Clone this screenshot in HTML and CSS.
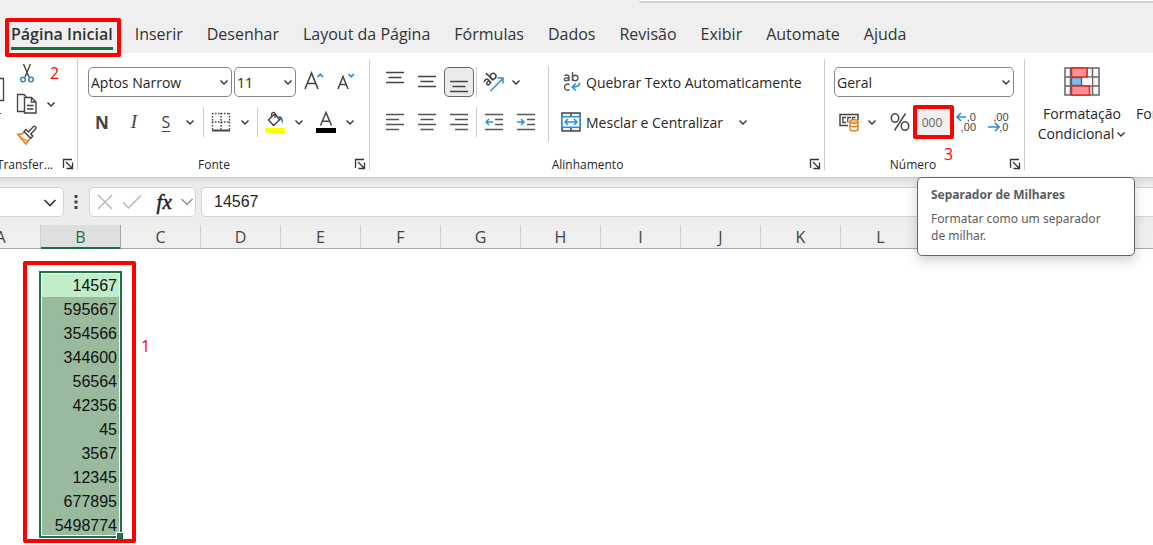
FILE: index.html
```html
<!DOCTYPE html>
<html lang="pt-BR">
<head>
<meta charset="utf-8">
<title>Planilha</title>
<link rel="stylesheet" href="styles.css">
</head>
<body>
<svg width="0" height="0" class="defs" aria-hidden="true">
  <symbol id="chev" viewBox="0 0 10 10"><path d="M1.500 3.500 5 7l3.500-3.500" fill="none" stroke="#333" stroke-width="1.400"/></symbol>
  <symbol id="launch" viewBox="0 0 12 12"><path d="M1.500 10V1.500H10M4 4l6 6M10.500 4.500v6h-6" fill="none" stroke="#333" stroke-width="1.300"/></symbol>
</svg>
<header class="top">
  <div class="search-edge"></div>
  <nav class="tabs">
    <a href="#" class="tab active">Página Inicial<span class="mark mark-tab"></span></a>
    <a href="#" class="tab">Inserir</a>
    <a href="#" class="tab">Desenhar</a>
    <a href="#" class="tab">Layout da Página</a>
    <a href="#" class="tab">Fórmulas</a>
    <a href="#" class="tab">Dados</a>
    <a href="#" class="tab">Revisão</a>
    <a href="#" class="tab">Exibir</a>
    <a href="#" class="tab">Automate</a>
    <a href="#" class="tab">Ajuda</a>
  </nav>
</header>

<section class="ribbon">
  <div class="group clipboard">
    <div class="clip-body">
      <button class="paste" aria-label="Colar"><svg width="6" height="40" viewBox="0 0 6 40"><path d="M0 1.500h3.500v22H0" fill="none" stroke="#444" stroke-width="1.300"/><path d="M0 36.500h1" stroke="#333"/></svg></button>
      <div class="clip-tools">
        <div class="line"><button class="btn" aria-label="Recortar"><svg width="16" height="22" viewBox="0 0 16 22"><path d="M4.500 2l5.500 13M11.500 2 6 15" fill="none" stroke="#444" stroke-width="1.400"/><circle cx="4" cy="17.500" r="2.300" fill="none" stroke="#2b88c8" stroke-width="1.500"/><circle cx="12" cy="17.500" r="2.300" fill="none" stroke="#2b88c8" stroke-width="1.500"/></svg></button><span class="note">2</span></div>
        <div class="line"><button class="btn" aria-label="Copiar"><svg width="22" height="22" viewBox="0 0 22 22"><path d="M8 18.500H1.500v-17H8l2.500 2.500" fill="#f5f5f5" stroke="#444" stroke-width="1.300"/><path d="M8.500 4.500h7l4.500 4.500v11H8.500zM15.500 4.500V9H20" fill="#fff" stroke="#444" stroke-width="1.400"/><path d="M11 12.500h6.500M11 16h6.500" stroke="#444" stroke-width="1.300"/></svg></button><button class="chev" aria-label="Opções de cópia"><svg width="10" height="10"><use href="#chev"/></svg></button></div>
        <div class="line"><button class="btn" aria-label="Pincel de formatação"><svg width="22" height="22" viewBox="0 0 22 22"><path d="M2 10.500c3 0 5-1 6.500-2.500l6 6c-1.500 1.500-3.500 4-4.500 6z" fill="#fff" stroke="#e07b10" stroke-width="1.600"/><path d="M4.500 13.500 12 17l-2.200 3z" fill="#fbc87d" stroke="#e07b10"/><path d="M8 7.500 10 5.500l2.500 2.500L17.500 2.500c1.500-1 3.500.800 2.200 2.300L14.800 10l2 2-2 2.200z" fill="#fff" stroke="#444" stroke-width="1.400"/></svg></button></div>
      </div>
    </div>
    <div class="caption"><span class="name">Transfer...</span><button class="launch" aria-label="Área de Transferência"><svg width="12" height="12"><use href="#launch"/></svg></button></div>
  </div>

  <div class="group font">
    <div class="row first">
      <select class="box font-name" aria-label="Fonte"><option>Aptos Narrow</option></select>
      <select class="box font-size" aria-label="Tamanho"><option>11</option></select>
      <button class="btn" aria-label="Aumentar fonte"><svg width="22" height="22" viewBox="0 0 22 22"><path d="M2 18 8.500 2 15 18M4.200 12.500h8.600" fill="none" stroke="#444" stroke-width="1.600"/><path d="M14.500 6 17.200 3.300 20 6" fill="none" stroke="#2b8fd6" stroke-width="1.700"/></svg></button>
      <button class="btn" aria-label="Diminuir fonte"><svg width="22" height="22" viewBox="0 0 22 22"><path d="M3 18 8 5.500 13 18M4.800 13.500h6.400" fill="none" stroke="#444" stroke-width="1.500"/><path d="M13.500 3l2.700 2.700L19 3" fill="none" stroke="#2b8fd6" stroke-width="1.700"/></svg></button>
    </div>
    <div class="row second">
      <button class="btn letter bold">N</button>
      <button class="btn letter italic">I</button>
      <button class="btn letter under">S</button>
      <button class="chev" aria-label="Sublinhado"><svg width="10" height="10"><use href="#chev"/></svg></button>
      <i class="sep"></i>
      <button class="btn" aria-label="Bordas"><svg width="20" height="20" viewBox="0 0 20 20"><path d="M1 1.500h18M1 10h18M1.500 1v17M10 1v17M18.500 1v17" fill="none" stroke="#444" stroke-width="1.400" stroke-dasharray="1.500 1.500"/><path d="M1 18.500h18" stroke="#444" stroke-width="2"/></svg></button>
      <button class="chev" aria-label="Opções de bordas"><svg width="10" height="10"><use href="#chev"/></svg></button>
      <i class="sep second-sep"></i>
      <button class="btn" aria-label="Cor de preenchimento"><svg width="20" height="22" viewBox="0 0 20 22"><path d="M3.500 9 10 2.500l4.500 6.500L8.500 14.500zM6.500 7V4C6.500 1 10 .500 10 3v4" fill="none" stroke="#444" stroke-width="1.400"/><path d="M13 5c4-.5 5.500 3 4.500 8.500-.5-3-1.500-5-3-5.500z" fill="#1c6fb5"/><path d="M0 17h20v5H0z" fill="#ff0"/></svg></button>
      <button class="chev" aria-label="Opções de preenchimento"><svg width="10" height="10"><use href="#chev"/></svg></button>
      <button class="btn color" aria-label="Cor da fonte"><svg width="20" height="22" viewBox="0 0 20 22"><path d="M4.500 14.500 10 1.500l5.500 13M6.500 10.300h7" fill="none" stroke="#444" stroke-width="1.500"/><path d="M0 17h20v5H0z"/></svg></button>
      <button class="chev" aria-label="Opções de cor"><svg width="10" height="10"><use href="#chev"/></svg></button>
    </div>
    <div class="caption"><span class="name">Fonte</span><button class="launch" aria-label="Opções de fonte"><svg width="12" height="12"><use href="#launch"/></svg></button></div>
  </div>

  <div class="group align">
    <div class="align-body">
      <div class="align-left">
        <div class="row first">
          <button class="btn" aria-label="Alinhar em cima"><svg width="18" height="22" viewBox="0 0 18 22"><path d="M0 1.500h18M2.500 6.500h13M0 11.500h18" stroke="#444" stroke-width="1.500"/></svg></button>
          <button class="btn" aria-label="Alinhar no meio"><svg width="18" height="22" viewBox="0 0 18 22"><path d="M0 5.500h18M2.500 10.500h13M0 15.500h18" stroke="#444" stroke-width="1.500"/></svg></button>
          <button class="btn on" aria-label="Alinhar embaixo"><svg width="18" height="22" viewBox="0 0 18 22"><path d="M0 10.500h18M2.500 15.500h13M0 20.500h18" stroke="#444" stroke-width="1.500"/></svg></button>
          <i class="sep tight"></i>
          <button class="btn" aria-label="Orientação"><svg width="22" height="22" viewBox="0 0 22 22"><g fill="none" stroke="#444" stroke-width="1.500" transform="rotate(-45 7 8)"><path d="M1 6.200C2.500 4.900 5.300 5 5.300 7.300v4.200M5.300 8.200C2.500 8.200 1 8.500 1 9.900c0 2 3.200 1.900 4.300-.4"/><path d="M8.300 1v10.500"/><circle cx="11.200" cy="8.300" r="2.800"/></g><path d="M7.500 20 20 7.500M14.500 7H20v5.500" fill="none" stroke="#2b8fd6" stroke-width="1.500"/></svg></button>
          <button class="chev orient" aria-label="Opções de orientação"><svg width="10" height="10"><use href="#chev"/></svg></button>
        </div>
        <div class="row second">
          <button class="btn" aria-label="Alinhar à esquerda"><svg width="18" height="18" viewBox="0 0 18 18"><path d="M0 1.500h18M0 6.500h13M0 11.500h18M0 16.500h13" stroke="#555" stroke-width="1.500"/></svg></button>
          <button class="btn" aria-label="Centralizar"><svg width="18" height="18" viewBox="0 0 18 18"><path d="M0 1.500h18M2.500 6.500h13M0 11.500h18M2.500 16.500h13" stroke="#555" stroke-width="1.500"/></svg></button>
          <button class="btn" aria-label="Alinhar à direita"><svg width="18" height="18" viewBox="0 0 18 18"><path d="M0 1.500h18M5 6.500h13M0 11.500h18M5 16.500h13" stroke="#555" stroke-width="1.500"/></svg></button>
          <i class="sep tight"></i>
          <button class="btn" aria-label="Diminuir recuo"><svg width="18" height="18" viewBox="0 0 18 18"><path d="M0 1.500h18M10 6.500h8M10 11.500h8M0 16.500h18" stroke="#555" stroke-width="1.500"/><path d="M8 9H1M4 6 1 9l3 3" fill="none" stroke="#2b8fd6" stroke-width="1.500"/></svg></button>
          <button class="btn" aria-label="Aumentar recuo"><svg width="18" height="18" viewBox="0 0 18 18"><path d="M0 1.500h18M10 6.500h8M10 11.500h8M0 16.500h18" stroke="#555" stroke-width="1.500"/><path d="M0 9h7M4 6l3 3-3 3" fill="none" stroke="#2b8fd6" stroke-width="1.500"/></svg></button>
        </div>
      </div>
      <div class="align-right">
        <div class="row first">
          <button class="wide"><svg width="20" height="22" viewBox="0 0 20 22"><g fill="none" stroke="#555" stroke-width="1.400"><path d="M3.500 4.800C5 3.500 8 3.500 8 6v4M8 6.800C5 6.800 3.300 7 3.300 8.400c0 2 3.500 1.800 4.700-.4"/><path d="M11.500 1v9"/><circle cx="14.200" cy="7" r="2.700"/><path d="M8.500 13.700c-2-1.300-5-.5-5 2.500s3 3.500 5 2.500"/></g><path d="M18.500 11.500c.5 3-2 4.500-7 4.500M15 12.500 11.300 16l3.700 3.500" fill="none" stroke="#2b8fd6" stroke-width="1.700"/></svg>Quebrar Texto Automaticamente</button>
        </div>
        <div class="row second">
          <button class="wide"><svg width="20" height="20" viewBox="0 0 20 20"><path d="M1 1h18v18H1zM10 1v4M10 15v4" fill="#eee" stroke="#444" stroke-width="1.500"/><path d="M1 4.800h18v10.400H1z" fill="#fff" stroke="#2b8fd6" stroke-width="1.500"/><path d="M4 10h12M7 7l-3 3 3 3M13 7l3 3-3 3" fill="none" stroke="#2b8fd6" stroke-width="1.500"/></svg>Mesclar e Centralizar</button>
          <button class="chev far" aria-label="Opções de mesclagem"><svg width="10" height="10"><use href="#chev"/></svg></button>
        </div>
      </div>
    </div>
    <div class="caption"><span class="name">Alinhamento</span><button class="launch" aria-label="Opções de alinhamento"><svg width="12" height="12"><use href="#launch"/></svg></button></div>
  </div>

  <div class="group number">
    <div class="row first"><select class="box format" aria-label="Formato de número"><option>Geral</option></select></div>
    <div class="row second">
      <button class="btn" aria-label="Formato contábil"><svg width="20" height="20" viewBox="0 0 20 20"><path d="M9 13.500H1v-11h18V8" fill="none" stroke="#444" stroke-width="1.500"/><path d="M7 5.500H3.800v5H7M12 5.500H8.800v5M16.500 5.500h-3v2" fill="none" stroke="#444" stroke-width="1.300"/><path d="M11 9.500v7.500c0 2.500 8 2.500 8 0V9.500" fill="#fff" stroke="#e07b10" stroke-width="1.400"/><path d="M11 13c0 2.300 8 2.300 8 0" fill="none" stroke="#e07b10" stroke-width="1.300"/><ellipse cx="15" cy="9.500" rx="4" ry="1.800" fill="#fbc87d" stroke="#e07b10" stroke-width="1.300"/></svg></button>
      <button class="chev" aria-label="Opções contábeis"><svg width="10" height="10"><use href="#chev"/></svg></button>
      <button class="btn percent" aria-label="Porcentagem"><svg width="20" height="20" viewBox="0 0 20 20"><path d="M15.500 1.500 4.500 18.500" stroke="#444" stroke-width="1.400"/><g fill="none" stroke="#444" stroke-width="1.500"><ellipse cx="5" cy="6" rx="3.700" ry="4.300"/><ellipse cx="15" cy="14" rx="3.700" ry="4.300"/></g></svg></button>
      <button class="btn thousands">000<span class="mark mark-thousands"></span></button>
      <button class="btn decimals" aria-label="Aumentar casas decimais"><svg width="10" height="10" viewBox="0 0 10 10"><path d="M10 5H1M5 1 1 5l4 4" fill="none" stroke="#2b8fd6" stroke-width="1.600"/></svg><span>,0</span><span class="low">,00</span></button>
      <button class="btn decimals down" aria-label="Diminuir casas decimais"><span class="high">,00</span><svg width="12" height="10" viewBox="0 0 12 10"><path d="M0 5h11M7 1l4 4-4 4" fill="none" stroke="#2b8fd6" stroke-width="1.600"/></svg><span>,0</span></button>
    </div>
    <div class="caption"><span class="name">Número</span><button class="launch" aria-label="Opções de número"><svg width="12" height="12"><use href="#launch"/></svg></button></div>
    <span class="note note-number">3</span>
    <div class="tooltip" role="tooltip"><strong>Separador de Milhares</strong><p>Formatar como um separador de milhar.</p></div>
  </div>

  <div class="group styles">
    <button class="big"><svg width="36" height="29" viewBox="0 0 36 29"><path d="M1 1h34v27H1zM1 10h34M1 19h34M6.500 1v27M28.500 1v27M23 1v27" fill="#fafafa" stroke="#666" stroke-width="1.500"/><path d="M17 10.700h11v7.500H17z" fill="#fafafa"/><path d="M7.500 1h15.500v9H7.500zM7.500 19h18v9h-18z" fill="#ff9096" stroke="#e3271c" stroke-width="1.500"/><path d="M7.500 10.700h10v7.600h-10z" fill="#83b9ea" stroke="#1c6fb5" stroke-width="1.300"/></svg><span>Formatação</span><span class="cond">Condicional<svg width="10" height="10"><use href="#chev"/></svg></span></button>
    <button class="big next"><span>Formatar</span></button>
  </div>
</section>

<section class="formula">
  <div class="fbox name-box"><button class="chev" aria-label="Caixa de nome"><svg width="14" height="10" viewBox="0 0 14 10"><path d="M1.500 2 7 7.500 12.500 2" fill="none" stroke="#333" stroke-width="1.600"/></svg></button></div>
  <svg class="dots" width="4" height="14" viewBox="0 0 4 14"><path d="M.500 0h3v3h-3zM.500 5.500h3v3h-3zM.500 11h3v3h-3z" fill="#444"/></svg>
  <div class="fbox actions">
    <button aria-label="Cancelar"><svg width="16" height="16" viewBox="0 0 16 16"><path d="M1 1l14 14M15 1 1 15" stroke="#b5b5b5" stroke-width="1.400"/></svg></button>
    <button aria-label="Inserir"><svg width="20" height="16" viewBox="0 0 20 16"><path d="M1 8l5.500 6L19 1.500" fill="none" stroke="#b5b5b5" stroke-width="1.400"/></svg></button>
    <button class="fx">fx</button>
    <button aria-label="Mais funções"><svg width="12" height="10" viewBox="0 0 12 10"><path d="M.500 2 6 7.500 11.500 2" fill="none" stroke="#888" stroke-width="1.200"/></svg></button>
  </div>
  <input class="fbox value" aria-label="Barra de fórmulas" value="14567">
</section>

<main class="sheet">
  <table>
    <thead><tr><th>A</th><th class="sel">B</th><th>C</th><th>D</th><th>E</th><th>F</th><th>G</th><th>H</th><th>I</th><th>J</th><th>K</th><th>L</th><th></th><th></th><th></th></tr></thead>
    <tbody>
      <tr><td></td><td></td></tr>
      <tr><td></td><td class="cell current">14567</td></tr>
      <tr><td></td><td class="cell">595667</td></tr>
      <tr><td></td><td class="cell">354566</td></tr>
      <tr><td></td><td class="cell">344600</td></tr>
      <tr><td></td><td class="cell">56564</td></tr>
      <tr><td></td><td class="cell">42356</td></tr>
      <tr><td></td><td class="cell">45</td></tr>
      <tr><td></td><td class="cell">3567</td></tr>
      <tr><td></td><td class="cell">12345</td></tr>
      <tr><td></td><td class="cell">677895</td></tr>
      <tr><td></td><td class="cell">5498774</td></tr>
    </tbody>
  </table>
  <div class="selection"></div>
  <span class="mark mark-cells"></span>
  <span class="note note-cells">1</span>
</main>
</body>
</html>
```

FILE: styles.css
```css
* { box-sizing: border-box; }
body {
  margin: 0;
  min-height: 100vh;
  overflow: hidden;
  background: #fff;
  color: #262626;
  font-family: "Open Sans", "Noto Sans", sans-serif;
  font-size: 14px;
}
.defs { position: absolute; }
button {
  border: 0;
  padding: 0;
  background: none;
  color: inherit;
  font: inherit;
}
svg { flex: none; display: block; }

/* Tabs */
.top { height: 53px; background: #efefef; }
.search-edge {
  height: 3px;
  margin-left: 639px;
  background: #fff;
  border-bottom: 2px solid #cfcfcf;
  border-bottom-left-radius: 4px;
}
.tabs { display: flex; gap: 24px; padding: 19px 11px 0; }
.tab {
  position: relative;
  height: 28px;
  line-height: 24px;
  font-size: 16px;
  color: #333;
  text-decoration: none;
  white-space: nowrap;
}
.tab.active { margin-right: -2px; font-weight: 600; border-bottom: 3px solid #14703f; }
.mark { position: absolute; border: 4px solid #f00; border-radius: 2px; pointer-events: none; }
.mark-tab { inset: -4px -8px -10px -6px; z-index: 2; }
.note { color: #f00; font-size: 16px; line-height: 20px; }

/* Ribbon */
.ribbon {
  display: flex;
  height: 125px;
  background: #fff;
  border-bottom: 1px solid #c8c8c8;
}
.group {
  position: relative;
  flex: none;
  display: flex;
  flex-direction: column;
  padding: 9px 0 1px;
}
.group:not(.styles)::after {
  content: "";
  position: absolute;
  right: 0;
  top: 6px;
  bottom: 7px;
  width: 1px;
  background: #ccc;
}
.row { display: flex; align-items: center; height: 40px; }
.btn {
  width: 32px;
  height: 30px;
  display: flex;
  align-items: center;
  justify-content: center;
}
.chev {
  width: 16px;
  height: 30px;
  display: flex;
  align-items: center;
  justify-content: center;
}
.sep { width: 1px; height: 30px; margin: 0 1px 0 5px; background: #ccc; }
.sep.second-sep { margin: 0 1px 0 4px; }
.sep.tight { margin: 0 1px; }
.caption {
  display: flex;
  align-items: center;
  margin-top: auto;
  height: 24px;
  font-size: 12px;
}
.caption .name { flex: 1; text-align: center; }
.launch { width: 20px; height: 20px; display: flex; align-items: center; justify-content: center; }
.box {
  appearance: none;
  height: 30px;
  padding: 0 2px;
  border: 1px solid #858585;
  border-radius: 5px;
  color: #262626;
  font: inherit;
  background: #fff url("data:image/svg+xml,%3Csvg xmlns='http://www.w3.org/2000/svg' width='10' height='10'%3E%3Cpath d='M1.500 3.500 5 7l3.500-3.500' fill='none' stroke='%23333' stroke-width='1.400'/%3E%3C/svg%3E") no-repeat right 2px center;
}

.clipboard { width: 78px; overflow: hidden; padding-top: 4px; }
.clip-body { display: flex; }
.paste { width: 11px; padding-top: 20px; display: flex; align-items: flex-start; }
.line { display: flex; align-items: center; height: 31px; }
.line .note { margin-left: 7px; }
.clipboard .name { flex: none; width: 58px; margin-left: -4px; white-space: nowrap; }
.clipboard .launch { margin-left: 4px; }

.font { width: 292px; }
.font .first { padding-left: 10px; }
.font .second { padding-left: 8px; }
.font-name { width: 144px; }
.font-size { width: 62px; margin-left: 2px; margin-right: 2px; }
.letter { font-size: 17px; color: #444; }
.bold { font-weight: 700; }
.italic { font-family: "Liberation Serif", serif; font-style: italic; font-size: 19px; }
.under { text-decoration: underline; font-size: 16px; text-underline-offset: 3px; }
.color { margin-left: 3px; }

.align { width: 455px; }
.align-body { display: flex; }
.align-left { width: 179px; padding-left: 9px; position: relative; }
.align-left::after {
  content: "";
  position: absolute;
  right: 0;
  top: 4px;
  bottom: 0;
  width: 1px;
  background: #ccc;
}
.align-right { padding-left: 12px; }
.on { width: 30px; margin: 0 1px; background: #ebebeb; border: 1px solid #666; border-radius: 5px; }
.orient { width: 12px; }
.wide { display: flex; align-items: center; gap: 5px; white-space: nowrap; }
.far { margin-left: 12px; }

.number { width: 200px; padding-left: 9px; }
.number .caption { margin-left: -9px; }
.number .launch { margin-left: 4px; }
.format { width: 180px; }
.number .second .btn:first-child { width: 30px; }
.percent { margin-left: 4px; }
.thousands { position: relative; width: 34px; padding-right: 2px; font-size: 12px; color: #666; background: #f0f0f0; }
.mark-thousands { inset: -2px -4px -2px -3px; }
.decimals {
  display: grid;
  grid-template-columns: 10px 10px;
  grid-auto-rows: 10px;
  align-content: center;
  justify-items: end;
  align-items: center;
  font-family: "Liberation Sans", Arial, sans-serif;
  font-size: 11px;
  line-height: 10px;
  color: #444;
}
.down { grid-template-columns: 12px 9px; }
.low, .high { grid-column: 1 / 3; }
.note-number { position: absolute; left: 119px; top: 91px; }
.tooltip {
  position: absolute;
  z-index: 5;
  left: 92px;
  top: 124px;
  width: 218px;
  padding: 8px 20px 11px 13px;
  border: 1px solid #666;
  border-radius: 5px;
  background: #fff;
  box-shadow: 0 5px 12px rgba(0, 0, 0, 0.18);
  color: #5c5c5c;
  font-family: "Noto Sans", sans-serif;
  font-size: 12px;
  line-height: 17px;
}
.tooltip p { margin: 7px 0 0; }

.styles { flex: 1; flex-direction: row; overflow: hidden; padding: 14px 0 0 7px; align-items: flex-start; }
.big { flex: none; width: 100px; display: flex; flex-direction: column; align-items: center; line-height: 20px; }
.big > svg { margin-bottom: 8px; }
.cond { display: flex; align-items: center; gap: 2px; }
.next { padding-top: 37px; margin-left: 4px; width: auto; }

/* Formula bar */
.formula {
  display: flex;
  align-items: center;
  height: 47px;
  padding-top: 1px;
  background: linear-gradient(#dcdcdc, #ececec 7px, #ededeb);
}
.fbox { height: 30px; border: 1px solid #d2d2d2; border-radius: 5px; background: #fff; }
.name-box { width: 64px; border-left: 0; display: flex; justify-content: flex-end; padding-right: 5px; border-radius: 0 5px 5px 0; }
.dots { margin: 0 11px 0 10px; }
.actions { width: 107px; display: flex; align-items: center; justify-content: space-between; padding: 0 2px 0 7px; }
.fx { font: italic 400 21px/24px "Liberation Serif", serif; color: #222; padding-left: 5px; -webkit-text-stroke: 0.500px #222; }
.value { flex: 1; min-width: 0; margin-left: 5px; padding: 0 12px; border-right: 0; border-radius: 5px 0 0 5px; font: 16px "Liberation Sans", Arial, sans-serif; color: #262626; }

/* Grid */
.sheet { position: relative; overflow: hidden; height: 320px; }
table { width: 1200px; margin-left: -39px; table-layout: fixed; border-collapse: separate; border-spacing: 0; }
th {
  height: 24px;
  padding: 0;
  background: #efefef;
  border-right: 1px solid #cfcfcf;
  border-bottom: 1px solid #a6a6a6;
  font-weight: 400;
  font-size: 16px;
  line-height: 22px;
  color: #444;
}
th.sel { background: #dfdfdf; color: #1a7044; box-shadow: inset 0 -1px #1a7044; border-bottom-color: #1a7044; border-right-color: #a6a6a6; }
td { height: 24px; padding: 0 4px 0 0; font: 16px/23px "Liberation Sans", Arial, sans-serif; text-align: right; color: #111; }
.cell { background: #9aba9e; }
.current { background: #c1eec8; }
.selection {
  position: absolute;
  left: 39px;
  top: 46px;
  width: 83px;
  height: 267px;
  border: 2px solid #1f7246;
  box-shadow: inset 0 0 0 1px #fff;
}
.selection::after {
  content: "";
  position: absolute;
  right: -3px;
  bottom: -3px;
  width: 6px;
  height: 6px;
  background: #1f7246;
  outline: 1px solid #fff;
}
.mark-cells { left: 23px; top: 36px; width: 113px; height: 282px; }
.note-cells { position: absolute; left: 141px; top: 111px; }
```
